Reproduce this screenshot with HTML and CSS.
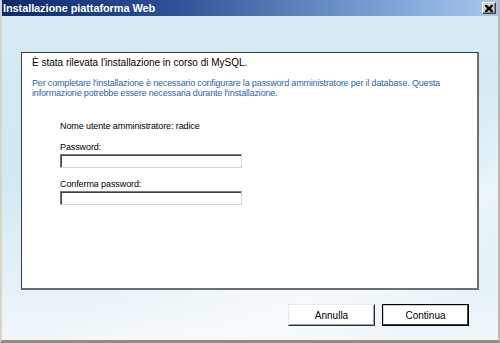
FILE: index.html
```html
<!DOCTYPE html>
<html lang="it">
<head>
    <meta charset="UTF-8">
    <meta name="viewport" content="width=device-width, initial-scale=1.0">
    <title>Installazione piattaforma Web</title>
    <link rel="stylesheet" href="styles.css">
</head>
<body>
    <div class="window">
        <div class="titlebar">
            <span class="title">Installazione piattaforma Web</span>
            <button class="close-btn" aria-label="Chiudi">
                <svg width="8" height="7" viewBox="0 0 8 7">
                    <path d="M0 0h2l2 2 2-2h2v1L6 3.5 8 6v1H6L4 5 2 7H0V6l2-2.5L0 1z" fill="#000"/>
                </svg>
            </button>
        </div>
        <div class="content">
            <div class="panel">
                <p class="lead">È stata rilevata l'installazione in corso di MySQL.</p>
                <p class="info">Per completare l'installazione è necessario configurare la password amministratore per il database. Questa informazione potrebbe essere necessaria durante l'installazione.</p>
                <div class="form">
                    <div class="user">Nome utente amministratore: radice</div>
                    <label class="first" for="pwd">Password:</label>
                    <input type="password" id="pwd">
                    <label for="pwd2">Conferma password:</label>
                    <input type="password" id="pwd2">
                </div>
            </div>
            <div class="actions">
                <button class="btn">Annulla</button>
                <button class="btn default">Continua</button>
            </div>
        </div>
    </div>
</body>
</html>
```

FILE: styles.css
```css
html, body {
    margin: 0;
    padding: 0;
}

body {
    font-family: "Liberation Sans", Arial, sans-serif;
    font-size: 11px;
    color: #000;
}

.window {
    width: 500px;
    height: 343px;
    box-sizing: border-box;
    display: flex;
    flex-direction: column;
    border-left: 2px solid #d8d4cc;
    border-right: 2px solid #b8b8b8;
    border-bottom: 3px solid #8c8c8c;
    background: #ece9d8;
}

.titlebar {
    height: 16px;
    display: flex;
    align-items: center;
    justify-content: space-between;
    padding: 0 2px 0 1px;
    background: linear-gradient(90deg, #0c2a6c 0%, #2f5296 35%, #6f95cc 70%, #a6c8ef 100%);
}

.title {
    color: #fff;
    font-weight: bold;
    font-size: 11px;
    letter-spacing: -0.1px;
}

.close-btn {
    width: 14px;
    height: 12px;
    padding: 0;
    display: flex;
    align-items: center;
    justify-content: center;
    background: #d4d0c8;
    border: 1px solid;
    border-color: #fff #404040 #404040 #fff;
    box-shadow: inset -1px -1px 0 #808080;
}

.content {
    flex: 1;
    display: flex;
    flex-direction: column;
    padding: 36px 19px 0 19px;
    /* light sky background with a soft diagonal sheen */
    background:
        linear-gradient(150deg, rgba(255,255,255,0) 55%, rgba(255,255,255,0.55) 75%, rgba(255,255,255,0) 90%),
        linear-gradient(180deg, #d7ecf4 0%, #cfe8f1 45%, #e4f1f7 80%, #eff6fa 100%);
}

.panel {
    height: 238px;
    box-sizing: border-box;
    background: #fff;
    border: 1px solid #3c3c3c;
    border-right: 2px solid #6e6e6e;
    border-bottom: 2px solid #6e6e6e;
    padding: 3px 10px 0 10px;
}

.panel p {
    margin: 0;
}

.lead {
    font-size: 10px;
    line-height: 14px;
}

.panel .info {
    margin-top: 8px;
    font-size: 9px;
    line-height: 10px;
    letter-spacing: -0.17px;
    color: #1c66b0;
}

.form {
    display: flex;
    flex-direction: column;
    align-items: flex-start;
    padding-left: 28px;
    margin-top: 22px;
    font-size: 9px;
    letter-spacing: -0.1px;
}

.user {
    line-height: 12px;
}

.form label {
    margin-top: 10px;
    line-height: 12px;
}

.form label.first {
    margin-top: 9px;
}

.form input {
    width: 182px;
    height: 14px;
    box-sizing: border-box;
    margin: 1px 0 0 0;
    padding: 0;
    border: 1px solid;
    border-color: #7a7a7a #d4d4d4 #d4d4d4 #7a7a7a;
    box-shadow: inset 1px 1px 0 #404040;
    background: #fff;
}

.actions {
    display: flex;
    justify-content: flex-end;
    gap: 7px;
    margin-top: 14px;
    padding-right: 10px;
}

.btn {
    width: 87px;
    height: 22px;
    box-sizing: border-box;
    font-family: "Liberation Sans", Arial, sans-serif;
    font-size: 10px;
    color: #000;
    background: #fff;
    border: 1px solid;
    border-color: #e8e8e8 #303030 #303030 #e8e8e8;
    box-shadow: inset -1px -1px 0 #a0a0a0;
}

.btn.default {
    border: 1px solid #000;
    box-shadow: inset -1px -1px 0 #404040, inset 1px 1px 0 #d0d0d0;
}
```
